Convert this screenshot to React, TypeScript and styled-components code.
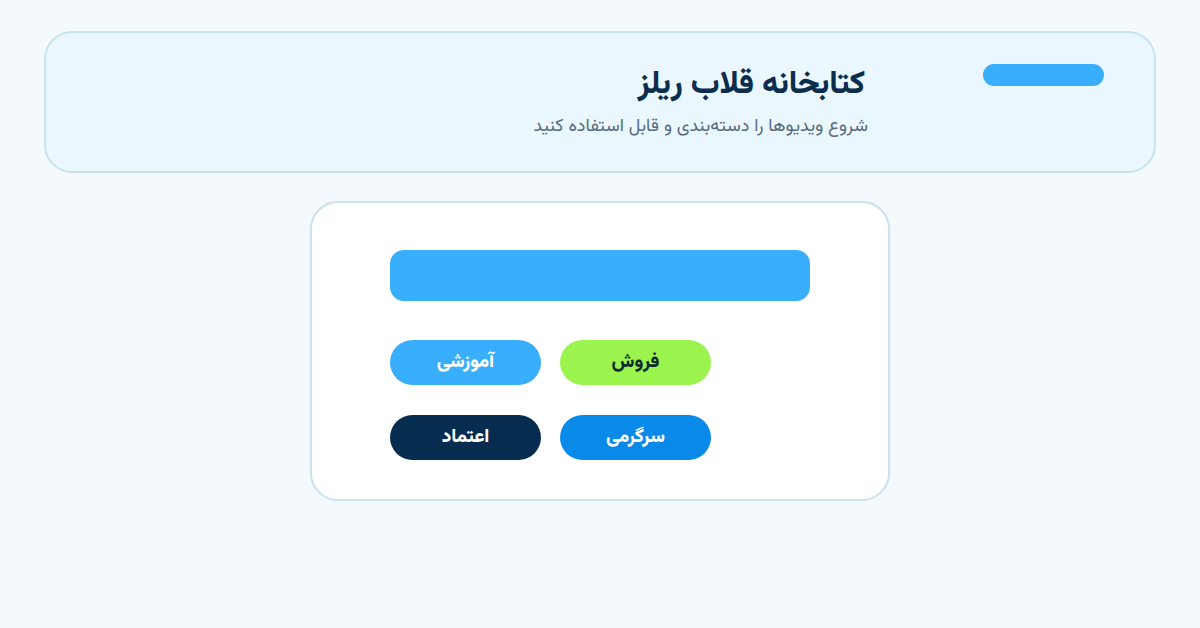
import React from "react";
import styled, { createGlobalStyle } from "styled-components";

const Global = createGlobalStyle`
  html, body { margin: 0; padding: 0; }
  body {
    background: #f3f9fc;
    font-family: "Vazirmatn", "Noto Sans Arabic", "DejaVu Sans", sans-serif;
    width: 1200px;
    height: 628px;
    overflow: hidden;
  }
`;

const Page = styled.div`
  direction: rtl;
  padding: 31px 44px 0 44px;
  display: flex;
  flex-direction: column;
  align-items: center;
  gap: 28px;
`;

const Header = styled.header`
  box-sizing: border-box;
  width: 1112px;
  height: 142px;
  background: #eaf7fe;
  border: 2px solid #c8e3ee;
  border-radius: 28px;
  padding: 31px 50px 0 50px;
  display: flex;
  align-items: flex-start;
  gap: 118px;
`;

const LogoBar = styled.div`
  width: 121px;
  height: 22px;
  border-radius: 11px;
  background: #38aefc;
  flex-shrink: 0;
`;

const TitleBlock = styled.div`
  display: flex;
  flex-direction: column;
  gap: 8px;
  margin-right: -3px;
`;

const Title = styled.h1`
  margin: 0;
  font-size: 32px;
  font-weight: 800;
  color: #0b2d4e;
  line-height: 42px;
  margin-right: 3px;
`;

const Subtitle = styled.p`
  margin: 0;
  font-size: 18px;
  color: #576a7c;
  line-height: 26px;
`;

const Card = styled.section`
  box-sizing: border-box;
  width: 580px;
  height: 300px;
  background: #ffffff;
  border: 2px solid #c8e3ee;
  border-radius: 28px;
  padding: 47px 78px 0 78px;
  display: flex;
  flex-direction: column;
  gap: 39px;
`;

const Banner = styled.div`
  height: 51px;
  border-radius: 14px;
  background: #38aefc;
`;

const Grid = styled.div`
  display: grid;
  grid-template-columns: 151px 151px;
  column-gap: 19px;
  row-gap: 30px;
  justify-content: end;
`;

const Pill = styled.button<{ $bg: string; $fg: string }>`
  height: 45px;
  border: none;
  border-radius: 23px;
  background: ${(p) => p.$bg};
  color: ${(p) => p.$fg};
  font-family: inherit;
  font-size: 19px;
  font-weight: 800;
  display: flex;
  align-items: center;
  justify-content: center;
  padding: 0;
`;

export default function App() {
  return (
    <>
      <Global />
      <Page>
        <Header>
          <LogoBar />
          <TitleBlock>
            <Title>کتابخانه قلاب ریلز</Title>
            <Subtitle>شروع ویدیوها را دسته‌بندی و قابل استفاده کنید</Subtitle>
          </TitleBlock>
        </Header>
        <Card>
          <Banner />
          <Grid>
            <Pill $bg="#9af44d" $fg="#0b2d2e">فروش</Pill>
            <Pill $bg="#38aefc" $fg="#ffffff">آموزشی</Pill>
            <Pill $bg="#0a8ae8" $fg="#ffffff">سرگرمی</Pill>
            <Pill $bg="#062c50" $fg="#ffffff">اعتماد</Pill>
          </Grid>
        </Card>
      </Page>
    </>
  );
}
